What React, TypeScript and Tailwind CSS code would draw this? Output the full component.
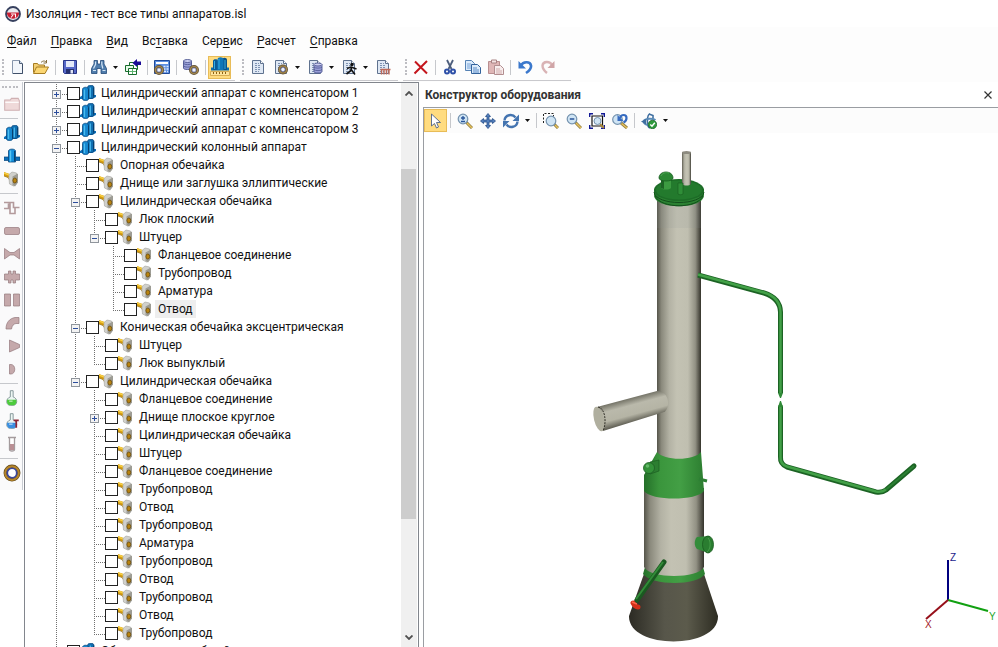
import { useState } from "react";
import type { ReactNode } from "react";

type NodeKind = "column" | "part";
type TreeRow = { text: string; level: number; kind?: NodeKind; state?: "open" | "closed"; selected?: boolean };

const TREE: TreeRow[] = [
  { text: "Цилиндрический аппарат с компенсатором 1", level: 0, kind: "column", state: "closed" },
  { text: "Цилиндрический аппарат с компенсатором 2", level: 0, kind: "column", state: "closed" },
  { text: "Цилиндрический аппарат с компенсатором 3", level: 0, kind: "column", state: "closed" },
  { text: "Цилиндрический колонный аппарат", level: 0, kind: "column", state: "open" },
  { text: "Опорная обечайка", level: 1 },
  { text: "Днище или заглушка эллиптические", level: 1 },
  { text: "Цилиндрическая обечайка", level: 1, state: "open" },
  { text: "Люк плоский", level: 2 },
  { text: "Штуцер", level: 2, state: "open" },
  { text: "Фланцевое соединение", level: 3 },
  { text: "Трубопровод", level: 3 },
  { text: "Арматура", level: 3 },
  { text: "Отвод", level: 3, selected: true },
  { text: "Коническая обечайка эксцентрическая", level: 1, state: "open" },
  { text: "Штуцер", level: 2 },
  { text: "Люк выпуклый", level: 2 },
  { text: "Цилиндрическая обечайка", level: 1, state: "open" },
  { text: "Фланцевое соединение", level: 2 },
  { text: "Днище плоское круглое", level: 2, state: "closed" },
  { text: "Цилиндрическая обечайка", level: 2 },
  { text: "Штуцер", level: 2 },
  { text: "Фланцевое соединение", level: 2 },
  { text: "Трубопровод", level: 2 },
  { text: "Отвод", level: 2 },
  { text: "Трубопровод", level: 2 },
  { text: "Арматура", level: 2 },
  { text: "Трубопровод", level: 2 },
  { text: "Отвод", level: 2 },
  { text: "Трубопровод", level: 2 },
  { text: "Отвод", level: 2 },
  { text: "Трубопровод", level: 2 },
  { text: "Обогреватель трубный", level: 0, kind: "column" },
];

const MENU = [
  ["", "Ф", "айл"],
  ["", "П", "равка"],
  ["", "В", "ид"],
  ["Вс", "т", "авка"],
  ["Сер", "в", "ис"],
  ["", "Р", "асчет"],
  ["", "С", "правка"],
];

// does a branch at this level go on below row i?
function continues(i: number, level: number) {
  for (let k = i + 1; k < TREE.length; k++) {
    if (TREE[k].level < level) return false;
    if (TREE[k].level === level) return true;
  }
  return false;
}

function Svg({ children, size = 16 }: { children: ReactNode; size?: 16 | 18 }) {
  return (
    <svg viewBox="0 0 16 16" className={size === 18 ? "h-[18px] w-[18px] shrink-0" : "h-4 w-4 shrink-0"} aria-hidden="true">
      {children}
    </svg>
  );
}

/* ---------- icons ---------- */

function PageShape() {
  return (
    <>
      <path d="M2.500 1.500h8l3 3v10h-11z" fill="#dfe8f4" stroke="#5f728f" />
      <path d="M10.500 1.500v3h3" fill="#fff" stroke="#5f728f" />
      <path d="M5 4.500h4M5 6.500h6M5 8.500h6M5 10.500h6M5 12.500h4" stroke="#7f93b2" strokeDasharray="2 1" />
    </>
  );
}

function Ring({ x, y, r }: { x: number; y: number; r: number }) {
  return (
    <>
      <circle cx={x} cy={y} r={r} fill="#fff" stroke="#66563a" strokeWidth="3" />
      <circle cx={x} cy={y} r={r} fill="none" stroke="#a88a4c" strokeWidth="1.200" />
      <circle cx={x} cy={y} r={r - 1.4} fill="#eef2fb" stroke="#6a74a8" strokeWidth=".8" />
    </>
  );
}

function Cylinder({ x, y }: { x: number; y: number }) {
  return (
    <>
      <path d={`M${x} ${y}v7c0 1 1.500 1.500 4 1.500s4-.5 4-1.500v-7z`} fill="#9aa0d8" stroke="#4d5590" strokeWidth=".9" />
      <path d={`M${x} ${y + 2.5}c1 1.500 7 1.500 8 0M${x} ${y + 5}c1 1.500 7 1.500 8 0`} fill="none" stroke="#4d5590" strokeWidth=".8" />
      <ellipse cx={x + 4} cy={y} rx="4" ry="1.500" fill="#ccd0f2" stroke="#4d5590" strokeWidth=".9" />
    </>
  );
}

const NewIcon = () => (
  <Svg>
    <path d="M2.500 1.500h7l3 3v10h-10z" fill="#f2f6fb" stroke="#8796ac" />
    <path d="M9.500 1.500v3h3" fill="#cfdbe9" stroke="#506078" />
    <path d="M3 14.500h9.500v-9.500" fill="none" stroke="#3f4f68" />
  </Svg>
);

const OpenIcon = () => (
  <Svg>
    <path d="M.5 13.500v-9h4l1 1.500h6v3" fill="#f3cf73" stroke="#a67c22" />
    <path d="M.5 14.500l3-6.500h12l-3.500 6.500z" fill="#fbd672" stroke="#a67c22" />
    <path d="M8 3.500c2-2 4-2 5.500 0M13.500 1v3h-3" fill="none" stroke="#806a3a" />
  </Svg>
);

const SaveIcon = () => (
  <Svg>
    <path d="M1.500 1.500h13v13h-12l-1-1z" fill="#5668c8" stroke="#2a3688" />
    <path d="M4 2h8v6h-8z" fill="#e4e9f8" />
    <path d="M4 10h8v4.500h-8z" fill="#25306f" />
    <path d="M8.500 11h2.500v3.500h-2.500z" fill="#dfe4f6" />
  </Svg>
);

const BinocularsIcon = () => (
  <Svg>
    <path d="M3 1.500h3.500v3.500h3v-3.500h3.500v3.500l2.500 4.500v5h-5.500v-5h-4v5h-5.500v-5l2.500-4.500z" fill="#4f7cab" stroke="#234a78" strokeWidth=".8" />
    <path d="M4.500 2.500v3l-2 4M10.800 2.500v3l1 4M2 11.500h3M11.500 11.500h3" stroke="#d2e4f5" fill="none" strokeWidth="1.200" />
  </Svg>
);

const InsertIcon = () => (
  <Svg>
    <path d="M4.500 3.500h8v7h-8z" fill="#fff" stroke="#176b2c" />
    <path d="M.5 6.500h8v6h-8z" fill="#e6fbe8" stroke="#176b2c" />
    <path d="M3.500 9.500h8v6h-8z" fill="#fff" stroke="#176b2c" />
    <path d="M4 12.500h7M7.500 10v5" stroke="#5db46e" />
    <path d="M7.500 4l4.500-4v2.500h4v3.500h-4v2z" fill="#1a0a96" />
  </Svg>
);

const CalcIcon = () => (
  <Svg>
    <path d="M.5 1.500h15v13h-15z" fill="#5d8fe0" stroke="#1f4a9a" />
    <path d="M2 4h12" stroke="#fff" strokeWidth="2" />
    <path d="M9.500 7.500h5M9.500 10h5M10 12.500h4" stroke="#dbe8fc" strokeDasharray="2 1" strokeWidth="1.500" />
    <Ring x={5} y={11} r={3.5} />
  </Svg>
);

const DbIcon = () => (
  <Svg>
    <Cylinder x={0.5} y={2} />
    <Ring x={11} y={11} r={3.5} />
  </Svg>
);

const ColumnsIcon = () => (
  <svg viewBox="0 0 20 20" className="h-5 w-5" aria-hidden="true">
    <path d="M1 10.500h18v3h-18z" fill="#0f6fae" />
    <path d="M3 4c0-2.500 5-2.500 5 0v9h-5z" fill="#0b5c96" />
    <path d="M12 3c0-3 5-3 5 0v10h-5z" fill="#0b5288" />
    <path d="M7.500 2.500c0-3 6-3 6 0v10.500h-6z" fill="#0f76b8" />
    <path d="M4.500 4v8M9 2v10M15 3v9" stroke="#35aee4" strokeWidth="1" />
    <path d="M.5 14.500h19v4h-19z" fill="#ffe49a" stroke="#d8ae54" />
    <path d="M3.500 15v2M6.500 15v2M9.500 15v2M12.500 15v2M15.500 15v2" stroke="#8a6214" />
  </svg>
);

const DocIcon = () => <Svg><PageShape /></Svg>;
const DocRingIcon = () => <Svg><PageShape /><Ring x={10} y={10.5} r={3.5} /></Svg>;
const DocDbIcon = () => <Svg><PageShape /><Cylinder x={7} y={5.5} /></Svg>;

const DocManIcon = () => (
  <Svg>
    <PageShape />
    <circle cx="11" cy="5.500" r="1.700" fill="#111" />
    <path d="M10.500 7.500l-.5 4-4.500 3.500M10.500 11l3.500 4.500M6 9.500l4-1.500 5.500 2" fill="none" stroke="#111" strokeWidth="1.600" />
  </Svg>
);

const DocRedIcon = () => (
  <Svg>
    <PageShape />
    <path d="M5.500 10.500h10M6.500 11v4.500M9 11v4.500M11.500 11v4.500M14 11v4.500" stroke="#c06a58" strokeWidth="1.400" />
  </Svg>
);

const DeleteIcon = () => (
  <Svg>
    <path d="M2 2.500l12 12M14 2l-12.500 12.500" stroke="#c4151c" strokeWidth="2" fill="none" />
  </Svg>
);

const CutIcon = () => (
  <Svg>
    <path d="M5 1l4.500 9M11 1l-4.500 9" stroke="#4c5d7c" strokeWidth="1.800" />
    <circle cx="5" cy="12.500" r="2" fill="none" stroke="#2e50a8" strokeWidth="2" />
    <circle cx="11" cy="12.500" r="2" fill="none" stroke="#2e50a8" strokeWidth="2" />
  </Svg>
);

const CopyIcon = () => (
  <Svg>
    <path d="M.5 1.500h6l3 3v7h-9z" fill="#dcebfb" stroke="#5682b4" />
    <path d="M2 5h4M2 7h4M2 9h4" stroke="#78a4d8" />
    <path d="M6.500 5.500h6l3 3v6h-9z" fill="#dcebfb" stroke="#34639c" />
    <path d="M8 9h4M8 11h6M8 13h6" stroke="#5b8cc8" />
  </Svg>
);

const PasteIcon = () => (
  <Svg>
    <path d="M.5 2.500h11v12h-11z" fill="#dfb6b6" stroke="#b98f90" />
    <path d="M3.500 1h5v3h-5z" fill="#f5e4e4" stroke="#a88283" />
    <path d="M6.500 6.500h6l3 3v6h-9z" fill="#f8eded" stroke="#b28e90" />
    <path d="M8 10h4M8 12h6M8 14h6" stroke="#cfaaab" />
  </Svg>
);

const UndoIcon = () => (
  <Svg>
    <path d="M4 6.500c2-4 9-4.500 10 0 .5 3-2 5.500-5 7.500" fill="none" stroke="#3b78cc" strokeWidth="2.600" />
    <path d="M1.500 2v7.500h7.500z" fill="#3b78cc" />
  </Svg>
);

const RedoIcon = () => (
  <Svg>
    <path d="M12 6c-2-4-9-4-9.500.5 0 3 2 5.500 4.500 7.500" fill="none" stroke="#d9b3b5" strokeWidth="2.400" />
    <path d="M14.500 2v7h-7z" fill="#d0a5a7" />
  </Svg>
);

const ApparatusIcon = () => (
  <Svg>
    <path d="M0 12l3-2h13v2l-4 2h-12z" fill="#0d6fb8" />
    <path d="M7.500 2.500c0-3 6.500-3 6.500 0v9.500c0 2-6.500 2-6.500 0z" fill="#0f6fb2" stroke="#06457c" strokeWidth=".8" />
    <path d="M2.500 4.500c0-3 6-3 6 0v9.500c0 2-6 2-6 0z" fill="#1687cf" stroke="#06457c" strokeWidth=".8" />
    <path d="M4.500 4.500v9.500M10.300 2.500v10" stroke="#4bbdf0" strokeWidth="1.200" />
    <path d="M8.500 4.500v9M13.500 2.500v9" stroke="#06406f" strokeWidth="1" />
  </Svg>
);

const SingleApparatusIcon = () => (
  <Svg>
    <path d="M0 9h16v3.500h-16z" fill="#0d6fb8" stroke="#06457c" strokeWidth=".7" />
    <path d="M4.500 3c0-2.500 7-2.500 7 0v11h-7z" fill="#1590dc" stroke="#06457c" strokeWidth=".8" />
    <path d="M6.500 2.500v11" stroke="#58c6f4" strokeWidth="1.400" />
    <path d="M10.500 3v10.500" stroke="#06406f" />
  </Svg>
);

const PartIcon = () => (
  <Svg>
    <path d="M0 1l7 2.500v5.500l-1.500-.5-1-2-4.500-1.500z" fill="#d79c0c" />
    <path d="M0 2l6.500 2.500" stroke="#f6cf45" strokeWidth="1.400" />
    <path d="M0 5l4 1.500 1.500 2.300h1" stroke="#8c6508" strokeWidth=".7" fill="none" />
    <path d="M5 7.500v-4l3-2.500 4.500 1v11l-3 2-4-2z" fill="#d0d0cc" stroke="#a3a39e" strokeWidth=".6" />
    <path d="M8.500 5.500l5.500-3v9l-3 4-2.500-1.500z" fill="#9d9c94" />
    <ellipse cx="10.800" cy="9.500" rx="1.900" ry="2.500" fill="#b98410" stroke="#6a4a0a" strokeWidth=".8" />
  </Svg>
);

const FolderIcon = () => (
  <Svg size={18}>
    <path d="M1.500 13.500v-9h5l1-1.500h6l1 2v8.500z" fill="#efd9d9" stroke="#cfb0b2" strokeWidth=".9" />
    <path d="M2 6.500h12" stroke="#fff" />
  </Svg>
);

const fadedParts = [
  { name: "Трасса", d: "M0 2.500h9.500v5h6M0 8.500h4.500v-5M6 3v10.500h5v-5.500", line: true },
  { name: "Трубопровод", d: "M2 4.500h12a1.500 1.500 0 0 1 1.500 1.500v4a1.500 1.500 0 0 1-1.500 1.500h-12a1.500 1.500 0 0 1-1.500-1.500v-4a1.500 1.500 0 0 1 1.500-1.500z" },
  { name: "Арматура", d: "M.5 2.500l5.500 4h4l5.500-4v10.500l-5.500-4h-4l-5.500 4z" },
  { name: "Фланцевое соединение", d: "M.5 5h4v-3h2.500v3h2v-3h2.500v3h4v6h-4v3h-2.500v-3h-2v3h-2.500v-3h-4z" },
  { name: "Обечайка", d: "M.5 2h6v12h-6zM9.500 2h6v12h-6z" },
  { name: "Отвод", d: "M2 14c0-6.500 3.500-10.500 9-11.500h4v6h-3c-2.500.5-4 2-4.500 5.500z" },
  { name: "Переход", d: "M5.500 2l10 4.500v3l-10 4.500z" },
  { name: "Днище", d: "M5.500 3.500h1.500c5 0 5 9.500 0 9.500h-1.500z" },
];

function FlaskIcon({ liquid, mark }: { liquid: string; mark?: boolean }) {
  return (
    <Svg size={18}>
      <path d="M6.500 1.500h2.500v5.500c4.500 1.500 4 7.500 0 7.500h-2.500c-4 0-4.500-6 0-7.500z" fill="#edf6f3" stroke="#7c8e92" strokeWidth=".8" />
      <path d="M3.700 9.500h8.100c.7 2.700-.8 5-3 5h-2.300c-2 0-3.500-2.300-2.800-5z" fill={liquid} />
      <path d="M5.500 10.800h3" stroke="#fff" opacity=".7" />
      {mark && <path d="M9.500 7.500h4.500M11.800 7.500v6.500" stroke="#8d2434" strokeWidth="1.500" />}
    </Svg>
  );
}

const TubeIcon = () => (
  <Svg>
    <path d="M4 1.500h8M5.500 2v11.500c0 2 5 2 5 0v-11.500" fill="#fff" stroke="#a49b9d" strokeWidth="1.300" />
    <path d="M6 8h4v6h-4z" fill="#b98f94" />
  </Svg>
);

const InsulationIcon = () => (
  <Svg size={18}>
    <circle cx="8" cy="8" r="5.800" fill="#fff" stroke="#5e4518" strokeWidth="3.400" />
    <circle cx="8" cy="8" r="6" fill="none" stroke="#b5852a" strokeWidth="2" />
    <circle cx="8" cy="8" r="4.200" fill="#fff" stroke="#3b479c" strokeWidth="1.500" />
  </Svg>
);

const PointerIcon = () => (
  <Svg>
    <path d="M3.500 1v12l3-2.500 2 4.500 2-1-2-4.500h4z" fill="#fff" stroke="#4d6288" strokeWidth=".9" />
  </Svg>
);

function Lens({ x = 6, y = 6 }: { x?: number; y?: number }) {
  return (
    <>
      <path d={`M${x + 3} ${y + 3}L15 15`} stroke="#8c7a40" strokeWidth="3" />
      <path d={`M${x + 4} ${y + 4}L15 15`} stroke="#e7c15a" strokeWidth="1.500" />
      <circle cx={x} cy={y} r="4.800" fill="#cfe4f4" stroke="#7492ae" strokeWidth="1.200" />
    </>
  );
}

const ZoomIcon = () => (
  <Svg><Lens /><path d="M6 3v4M4 5h4M4 8.500h4" stroke="#29559b" strokeWidth="1.300" /></Svg>
);

const PanIcon = () => (
  <Svg>
    <path d="M8 .5l2.500 3h-1.500v3.500h3.500v-1.500l3 2.500-3 2.500v-1.500h-3.500v3.500h1.500l-2.500 3-2.500-3h1.500v-3.500h-3.500v1.500l-3-2.500 3-2.500v1.500h3.500v-3.500h-1.500z" fill="#527ebb" stroke="#274e88" strokeWidth=".8" />
  </Svg>
);

const RotateIcon = () => (
  <Svg>
    <path d="M1.500 7.500c.5-6 8-7 11-3M14.500 8.500c-.5 6-8 7-11 3" fill="none" stroke="#4474b0" strokeWidth="2.400" />
    <path d="M16 1.500v6.500h-6.500zM0 14.500v-6.500h6.500z" fill="#4474b0" />
  </Svg>
);

const ZoomWindowIcon = () => (
  <Svg><path d="M.5 10v-9.500h10v3" fill="none" stroke="#222" strokeDasharray="2 1.500" /><Lens x={8} y={8} /></Svg>
);
const ZoomOutIcon = () => <Svg><Lens /><path d="M3.800 6h4.500" stroke="#29559b" strokeWidth="1.500" /></Svg>;

const ExtentsIcon = () => (
  <Svg>
    <path d="M.7 4v-3.300h3.300M12 .7h3.300v3.300M15.300 12v3.300h-3.300M4 15.300h-3.300v-3.300" fill="none" stroke="#131a96" strokeWidth="1.400" />
    <path d="M3 3h10.500v10h-10.500z" fill="#fff" stroke="#111" strokeWidth="1.200" />
    <path d="M11 11l4 4" stroke="#a8883a" strokeWidth="2" />
    <circle cx="8.500" cy="8" r="3.500" fill="#cfe4f4" stroke="#7492ae" />
  </Svg>
);

const ZoomBackIcon = () => (
  <Svg>
    <Lens x={5.5} y={6.5} />
    <path d="M8 5c1-4 6.500-4 6.500 0 0 2-1 3.500-3 4.500" fill="none" stroke="#376bc0" strokeWidth="2.200" />
    <path d="M5.500 2v6h6z" fill="#376bc0" />
  </Svg>
);

const OrbitIcon = () => (
  <Svg>
    <path d="M9 1c-3 0-4 14 0 14" fill="none" stroke="#3f6e9f" strokeWidth="1.600" />
    <path d="M8 1l4 1.500v3" fill="none" stroke="#3f6e9f" strokeWidth="1.600" />
    <path d="M14.500 7c-3-2-9-1.500-11 0-2 2 0 4.500 3 5" fill="none" stroke="#5b8bb8" strokeWidth="2" />
    <path d="M0 8.500l5-2.500v5.500z" fill="#3f6e9f" />
    <circle cx="11.500" cy="11.500" r="4.200" fill="#2e9a3c" stroke="#166323" strokeWidth=".7" />
    <path d="M9.300 11.500l1.700 1.700 2.800-3.500" fill="none" stroke="#fff" strokeWidth="1.400" />
  </Svg>
);

const AppIcon = () => (
  <Svg>
    <circle cx="8" cy="8" r="7" fill="#e9eaee" stroke="#36405e" strokeWidth="1.800" />
    <path d="M1.800 6.500h12.400a6.200 6.200 0 0 1-12.400 0z" fill="#c81e32" />
    <path d="M6 8h4.500v3.500M6 11.500l2-2.500" stroke="#fff" strokeWidth="1.100" fill="none" />
  </Svg>
);

/* ---------- toolbar pieces ---------- */

function ToolButton({ label, active, children }: { label: string; active?: boolean; children: ReactNode }) {
  return (
    <button
      type="button"
      aria-label={label}
      title={label}
      className={`flex h-[23px] w-[23px] shrink-0 items-center justify-center ${
        active ? "border border-[#e8bc58] bg-[#ffdc80]" : "hover:bg-[#fdf0cc]"
      }`}
    >
      {children}
    </button>
  );
}

function DropArrow({ label }: { label: string }) {
  return (
    <button type="button" aria-label={label} className="flex h-[23px] w-[11px] shrink-0 items-center justify-center">
      <svg viewBox="0 0 5 3" className="h-[3px] w-[5px]" aria-hidden="true">
        <path d="M0 0h5l-2.500 3z" fill="#111" />
      </svg>
    </button>
  );
}

function Sep() {
  return (
    <div className="flex h-[23px] w-1.5 shrink-0 justify-center py-1">
      <div className="w-px bg-[#c6c8cc]" />
    </div>
  );
}

function SideSep() {
  return (
    <div className="flex h-1.5 items-center">
      <div className="h-px w-[18px] bg-[#c6c8cc]" />
    </div>
  );
}

function Grip() {
  return (
    <div className="flex h-4 w-1.5 shrink-0 justify-center">
      <div className="border-l-2 border-dotted border-[#bdbdc2]" />
    </div>
  );
}

function MainToolbar() {
  return (
    <div className="flex h-[27px] items-stretch gap-[5px]">
      <div className="flex items-center border-b border-[#c9c9cd] pr-1">
        <Grip />
        <ToolButton label="Создать"><NewIcon /></ToolButton>
        <ToolButton label="Открыть"><OpenIcon /></ToolButton>
        <Sep />
        <ToolButton label="Сохранить"><SaveIcon /></ToolButton>
        <Sep />
        <ToolButton label="Найти"><BinocularsIcon /></ToolButton>
        <DropArrow label="Параметры поиска" />
        <ToolButton label="Добавить"><InsertIcon /></ToolButton>
        <Sep />
        <ToolButton label="Калькулятор"><CalcIcon /></ToolButton>
        <Sep />
        <ToolButton label="База изоляции"><DbIcon /></ToolButton>
        <Sep />
        <ToolButton label="Конструктор" active><ColumnsIcon /></ToolButton>
      </div>
      <div className="flex items-center border-b border-[#c9c9cd] pr-1">
        <Grip />
        <ToolButton label="Отчет"><DocIcon /></ToolButton>
        <ToolButton label="Ведомость изоляции"><DocRingIcon /></ToolButton>
        <DropArrow label="Виды ведомости" />
        <ToolButton label="Ведомость материалов"><DocDbIcon /></ToolButton>
        <DropArrow label="Виды материалов" />
        <ToolButton label="Ведомость работ"><DocManIcon /></ToolButton>
        <DropArrow label="Виды работ" />
        <ToolButton label="Смета"><DocRedIcon /></ToolButton>
      </div>
      <div className="flex items-center border-b border-[#c9c9cd] pr-3">
        <Grip />
        <ToolButton label="Удалить"><DeleteIcon /></ToolButton>
        <Sep />
        <ToolButton label="Вырезать"><CutIcon /></ToolButton>
        <ToolButton label="Копировать"><CopyIcon /></ToolButton>
        <ToolButton label="Вставить"><PasteIcon /></ToolButton>
        <Sep />
        <ToolButton label="Отменить"><UndoIcon /></ToolButton>
        <ToolButton label="Вернуть"><RedoIcon /></ToolButton>
      </div>
    </div>
  );
}

function SideToolbar() {
  return (
    <div className="w-[23px] shrink-0">
      <div className="flex flex-col border-r border-[#c9ccd2] bg-[#fafafb] pt-1 pb-1.5">
        <div className="mx-0.5 mb-1 w-4 border-t-2 border-dotted border-[#bdbdc2]" />
        <ToolButton label="Папка"><FolderIcon /></ToolButton>
        <SideSep />
        <ToolButton label="Группа аппаратов"><ApparatusIcon /></ToolButton>
        <ToolButton label="Аппарат"><SingleApparatusIcon /></ToolButton>
        <ToolButton label="Элемент"><PartIcon /></ToolButton>
        <SideSep />
        {fadedParts.map((p) => (
          <ToolButton key={p.name} label={p.name}>
            <Svg>
              <path
                d={p.d}
                fill={p.line ? "none" : "#c5a9ab"}
                stroke={p.line ? "#b39a9c" : "#94797c"}
                strokeWidth={p.line ? 1.6 : 0.7}
              />
            </Svg>
          </ToolButton>
        ))}
        <SideSep />
        <ToolButton label="Вещество"><FlaskIcon liquid="#4ccb3c" /></ToolButton>
        <ToolButton label="Температура вещества"><FlaskIcon liquid="#3b8fe0" mark /></ToolButton>
        <ToolButton label="Проба"><TubeIcon /></ToolButton>
        <SideSep />
        <ToolButton label="Изоляция"><InsulationIcon /></ToolButton>
      </div>
    </div>
  );
}

/* ---------- tree ---------- */

function Guide({ down, up, across }: { down: boolean; up: boolean; across: boolean }) {
  return (
    <svg viewBox="0 0 19 18" className="h-[18px] w-[19px] shrink-0" aria-hidden="true">
      <g stroke="#707070" strokeDasharray="1 1" shapeRendering="crispEdges">
        {up && <path d="M8.500 0v10" />}
        {down && <path d="M8.500 10v8" />}
        {across && <path d="M8 10.500h11" />}
      </g>
    </svg>
  );
}

function Expander({ open, name }: { open: boolean; name: string }) {
  return (
    <button type="button" aria-label={`${open ? "Свернуть" : "Развернуть"}: ${name}`} className="mt-0.5 mr-1.5 -ml-[15px] shrink-0">
      <svg viewBox="0 0 9 9" className="relative h-[9px] w-[9px]" aria-hidden="true" shapeRendering="crispEdges">
        <path d="M.5 .5h8v8h-8z" fill="#f3f3f3" stroke="#8f959c" />
        <path d="M2 4.500h5" stroke="#2b4d9c" />
        {!open && <path d="M4.500 2v5" stroke="#2b4d9c" />}
      </svg>
    </button>
  );
}

function Row({ row, index }: { row: TreeRow; index: number }) {
  const [checked, setChecked] = useState(false);
  const id = `node-${index}`;
  const levels = Array.from({ length: row.level + 1 }, (_, l) => l);

  return (
    <li className="flex h-[18px] items-center">
      {levels.map((l) => {
        const own = l === row.level;
        const goesOn = continues(index, l);
        return <Guide key={l} up={own || goesOn} down={goesOn} across={own} />;
      })}
      {row.state && <Expander open={row.state === "open"} name={row.text} />}
      <input
        id={id}
        type="checkbox"
        checked={checked}
        onChange={(e) => setChecked(e.target.checked)}
        className="h-[13px] w-[13px] shrink-0 appearance-none border border-[#222] bg-white checked:bg-[#4b6ea8]"
      />
      <label htmlFor={id} className="flex items-center gap-0.5">
        {row.kind === "column" ? <ApparatusIcon /> : <PartIcon />}
        <span className={`px-[3px] leading-[18px] whitespace-nowrap ${row.selected ? "bg-[#eeeeee]" : ""}`}>{row.text}</span>
      </label>
    </li>
  );
}

function ScrollArrow({ d, label }: { d: string; label: string }) {
  return (
    <button type="button" aria-label={label} className="flex h-5 shrink-0 items-center justify-center">
      <svg viewBox="0 0 8 5" className="h-[5px] w-2" aria-hidden="true">
        <path d={d} fill="none" stroke="#505050" strokeWidth="1.800" />
      </svg>
    </button>
  );
}

function TreePanel() {
  return (
    <div className="ml-px flex w-[395px] shrink-0 overflow-hidden border-x border-t border-[#82868d] bg-white">
      <ul className="min-w-0 flex-1 overflow-hidden pt-px pl-[23px]">
        {TREE.map((row, i) => (
          <Row key={i} row={row} index={i} />
        ))}
      </ul>
      <div className="mr-px flex w-4 shrink-0 flex-col bg-[#f0f0f0]">
        <ScrollArrow d="M.5 4.500l3.500-3.500 3.500 3.500" label="Прокрутить вверх" />
        <div className="grow-[66]" />
        <div className="mr-px grow-[350] bg-[#cdcdcd]" />
        <div className="grow-[108]" />
        <ScrollArrow d="M.5 .5l3.500 3.500 3.500-3.500" label="Прокрутить вниз" />
      </div>
    </div>
  );
}

/* ---------- 3D view ---------- */

function Scene() {
  return (
    <svg viewBox="424 133 574 514" className="min-h-0 w-full flex-1 bg-white font-['Liberation_Sans',sans-serif]" role="img" aria-label="Колонный аппарат">
      <defs>
        <linearGradient id="shell">
          <stop offset="0" stopColor="#55544a" />
          <stop offset=".1" stopColor="#8a897c" />
          <stop offset=".28" stopColor="#b3b2a4" />
          <stop offset=".45" stopColor="#c3c2b3" />
          <stop offset=".7" stopColor="#c0bfb0" />
          <stop offset=".87" stopColor="#929184" />
          <stop offset="1" stopColor="#34332b" />
        </linearGradient>
        <linearGradient id="green">
          <stop offset="0" stopColor="#246f29" />
          <stop offset=".25" stopColor="#3a953c" />
          <stop offset=".6" stopColor="#439f45" />
          <stop offset="1" stopColor="#2c7d30" />
        </linearGradient>
        <linearGradient id="skirt">
          <stop offset="0" stopColor="#2c2b24" />
          <stop offset=".4" stopColor="#57564a" />
          <stop offset=".65" stopColor="#5c5b4c" />
          <stop offset="1" stopColor="#2d2c22" />
        </linearGradient>
        <linearGradient id="branch" gradientUnits="userSpaceOnUse" x1="627" y1="398" x2="634" y2="424">
          <stop offset="0" stopColor="#6b6a5e" />
          <stop offset=".3" stopColor="#bab9ab" />
          <stop offset=".65" stopColor="#b5b4a5" />
          <stop offset="1" stopColor="#4b4a40" />
        </linearGradient>
      </defs>

      {/* skirt */}
      <path d="M645 571L629 616C628 650 719 650 718 616L703 571z" fill="url(#skirt)" />
      <path d="M645 567L643 574C652 586 697 586 705 574L703 567z" fill="url(#green)" />

      {/* lower shell */}
      <path d="M644 488h60v79c-6 12-54 12-60 0z" fill="url(#shell)" />

      {/* main shell */}
      <path d="M657 196h44v259c-7 8-37 8-44 0z" fill="url(#shell)" />
      <path d="M657 200h44v28h-44z" fill="#8f9394" opacity=".12" />

      {/* branch */}
      <path d="M597 407L657 391C669 390 671 408 664 412L603 431z" fill="url(#branch)" />
      <ellipse cx="599" cy="419" rx="5" ry="12.500" transform="rotate(-14 599 419)" fill="#b0af9f" />
      <path d="M598 407C605 408 607 422 603 431" fill="none" stroke="#33322a" strokeDasharray="2 1" />

      {/* cone */}
      <path d="M657 452C664 461 694 461 701 452L704 491C697 501 651 501 644 491V475z" fill="url(#green)" />
      <path d="M650 462l9-2v11l-9 3z" fill="#2c7e31" stroke="#1d5e23" strokeWidth=".7" />
      <circle cx="649" cy="468" r="5.500" fill="#349139" stroke="#1d5e23" strokeWidth=".8" />
      <circle cx="647.500" cy="466" r="1.800" fill="#65b969" />
      <path d="M699 479l8 2" stroke="#2d7f34" strokeWidth="3" />

      {/* manhole */}
      <path d="M697 537l12 -1v17l-12-4c-3-3-3-9 0-12z" fill="#338c3a" />
      <ellipse cx="708" cy="544.500" rx="5.500" ry="8.500" fill="#2a7d30" stroke="#195a1e" strokeWidth=".8" />
      <path d="M708 538c3 3 3 11-1 14" fill="none" stroke="#4ca64f" strokeWidth=".8" />

      {/* drain */}
      <path d="M664 562L637 600" stroke="#1a5920" strokeWidth="5" strokeLinecap="round" />
      <path d="M663 562L636 599" stroke="#328b38" strokeWidth="2" />
      <path d="M633 603c1 2 3 4 5 4" fill="none" stroke="#d52f19" strokeWidth="5" strokeLinecap="round" />
      <path d="M632 602l5 2" stroke="#ff6749" strokeWidth="1.500" />

      {/* cover */}
      <path d="M654 189v6c0 15 50 15 50 0v-6z" fill="#2b8132" />
      <path d="M654 192c2 14 48 14 50 0M655 196c6 13 42 13 48 0" fill="none" stroke="#124e1b" />
      <ellipse cx="679" cy="190" rx="25" ry="11" fill="#1d6c27" />
      <ellipse cx="679" cy="190" rx="23" ry="9.500" fill="#237a2d" />
      <path d="M661 180h10v8c-2 2-8 2-10 0z" fill="#3c9a41" />
      <path d="M661 180h3v9l-3-1z" fill="#1d6425" />
      <path d="M659 178c0-8 14-8 14 0 0 4-14 4-14 0z" fill="#2b8733" stroke="#16591e" strokeWidth=".8" />
      <path d="M661 176c1-3 5-4 8-3" fill="none" stroke="#4da552" />
      <path d="M682 152h9v32c-2 2-7 2-9 0z" fill="url(#shell)" />
      <ellipse cx="686.500" cy="152.500" rx="4.500" ry="1.500" fill="#8d8b80" />
      <path d="M678 183h5v11c-1 1-4 1-5 0z" fill="#2f8e38" stroke="#175a1f" strokeWidth=".6" />

      {/* pipeline */}
      <g fill="none" strokeLinejoin="round">
        <g stroke="#1c6324" strokeWidth="5">
          <path d="M698 275L764 293Q780 298 780.500 312V393" />
          <path d="M780.500 407V457Q780 464 787 467L876 492Q882 493 886 490L914 466" strokeLinecap="round" />
        </g>
        <g stroke="#42a047" strokeWidth="2.500">
          <path d="M698 274.500L764 292.500Q780 297.500 780.500 312V393" />
          <path d="M780.500 407V457Q780 464 787 466.500L876 491.500Q882 492.500 886 489.500" />
        </g>
        <path d="M886 489.500L914 466" stroke="#2b8033" strokeWidth="2" />
      </g>
      <path d="M778 393h5l-2 5h-1zM780 401h1l2 6h-5z" fill="#2f8a37" />

      {/* axes */}
      <path d="M948 600V560" stroke="#00007f" strokeWidth="2" />
      <path d="M948 600L988 611" stroke="#11a011" strokeWidth="2" />
      <path d="M948 600L926 619" stroke="#96101a" strokeWidth="2" />
      <text x="950" y="561" fontSize="10" fill="#1c1c8c">Z</text>
      <text x="989" y="620" fontSize="10" fill="#23a523">Y</text>
      <text x="925" y="628" fontSize="10" fill="#a3222b">X</text>
    </svg>
  );
}

function Designer() {
  return (
    <section className="ml-1 flex min-w-0 flex-1 flex-col">
      <header className="flex h-[25px] items-center justify-between pr-1 pl-0.5">
        <h2 className="text-[12px] font-bold text-[#333]">Конструктор оборудования</h2>
        <button type="button" aria-label="Закрыть" className="p-0.5">
          <svg viewBox="0 0 8 8" className="h-2 w-2" aria-hidden="true">
            <path d="M.5 .5l7 7M7.500 .5l-7 7" stroke="#333" strokeWidth="1.200" />
          </svg>
        </button>
      </header>
      <div className="flex min-h-0 flex-1 flex-col border-t border-l border-[#9a9da2]">
        <div className="flex h-[25px] shrink-0 items-center bg-[#fcfcfc]">
          <ToolButton label="Выбор" active><PointerIcon /></ToolButton>
          <Sep />
          <ToolButton label="Масштаб"><ZoomIcon /></ToolButton>
          <ToolButton label="Сдвиг"><PanIcon /></ToolButton>
          <ToolButton label="Вращение"><RotateIcon /></ToolButton>
          <DropArrow label="Режимы вращения" />
          <Sep />
          <ToolButton label="Увеличить область"><ZoomWindowIcon /></ToolButton>
          <ToolButton label="Уменьшить"><ZoomOutIcon /></ToolButton>
          <ToolButton label="Показать все"><ExtentsIcon /></ToolButton>
          <ToolButton label="Предыдущий вид"><ZoomBackIcon /></ToolButton>
          <Sep />
          <ToolButton label="Ориентация"><OrbitIcon /></ToolButton>
          <DropArrow label="Виды" />
        </div>
        <Scene />
      </div>
    </section>
  );
}

export default function App() {
  return (
    <div className="flex h-screen flex-col overflow-hidden bg-white font-['Roboto','Noto_Sans',sans-serif] text-[12px] text-[#111]">
      <header className="flex h-[27px] shrink-0 items-center gap-[5px] pl-[5px]">
        <AppIcon />
        <h1>Изоляция - тест все типы аппаратов.isl</h1>
      </header>
      <nav className="flex h-[27px] shrink-0 items-center gap-[14px] bg-[#fdfdfd] pl-[7px]">
        {MENU.map(([before, key, after]) => (
          <button key={before + key + after} type="button">
            {before}
            <span className="underline underline-offset-2">{key}</span>
            {after}
          </button>
        ))}
      </nav>
      <div className="shrink-0 bg-[#fdfdfd] pb-px">
        <MainToolbar />
      </div>
      <main className="flex min-h-0 flex-1">
        <SideToolbar />
        <TreePanel />
        <Designer />
      </main>
    </div>
  );
}
